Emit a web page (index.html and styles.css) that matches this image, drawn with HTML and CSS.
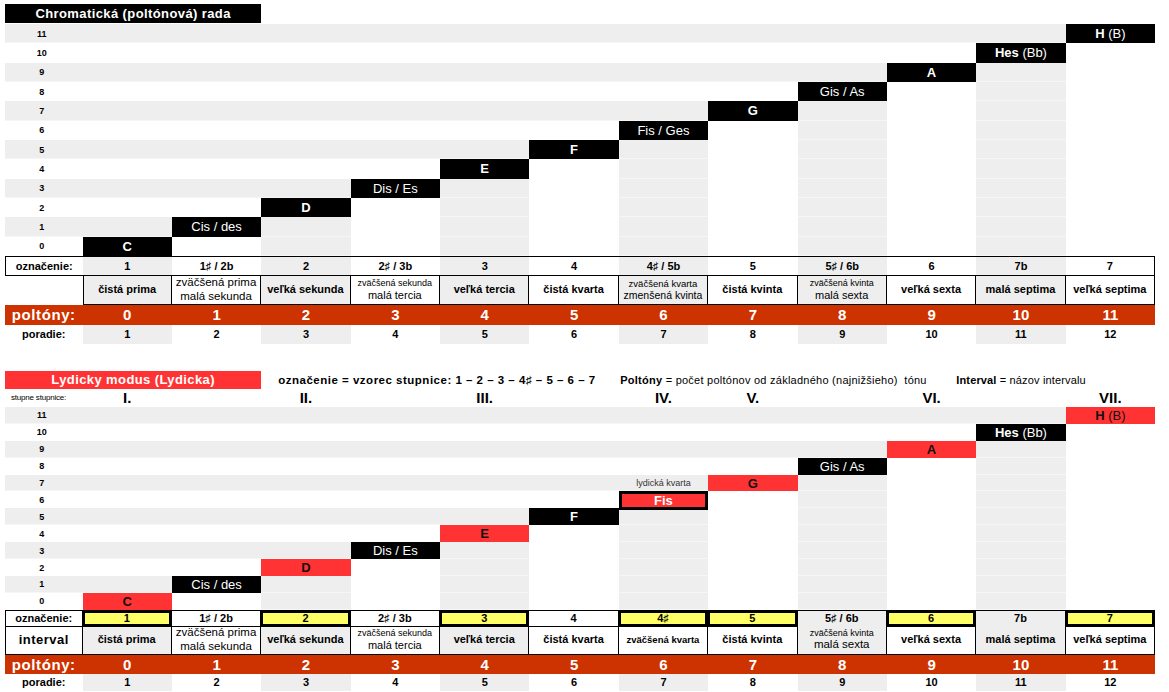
FILE: index.html
```html
<!DOCTYPE html>
<html lang="sk">
<head>
<meta charset="utf-8">
<title>Chromatická rada a Lydický modus</title>
<link rel="stylesheet" href="styles.css">
</head>
<body>
<div class="page">
  <section class="sec">
    <div class="grid titlerow"><span class="title">Chromatická (poltónová) rada</span></div>
    <div class="grid chart chart1">
      <span class="l g">11</span><span class="g"></span><span class="g"></span><span class="g"></span><span class="g"></span><span class="g"></span><span class="g"></span><span class="g"></span><span class="g"></span><span class="g"></span><span class="g"></span><span class="g"></span><span class="n a"><b>H</b>&nbsp;(B)</span>
      <span class="l">10</span><span></span><span></span><span></span><span></span><span></span><span></span><span></span><span></span><span></span><span></span><span class="n a"><b>Hes</b>&nbsp;(Bb)</span><span></span>
      <span class="l g">9</span><span class="g"></span><span class="g"></span><span class="g"></span><span class="g"></span><span class="g"></span><span class="g"></span><span class="g"></span><span class="g"></span><span class="g"></span><span class="n">A</span><span class="g"></span><span></span>
      <span class="l">8</span><span></span><span></span><span></span><span></span><span></span><span></span><span></span><span></span><span class="n a">Gis / As</span><span></span><span class="g"></span><span></span>
      <span class="l g">7</span><span class="g"></span><span class="g"></span><span class="g"></span><span class="g"></span><span class="g"></span><span class="g"></span><span class="g"></span><span class="n">G</span><span class="g"></span><span></span><span class="g"></span><span></span>
      <span class="l">6</span><span></span><span></span><span></span><span></span><span></span><span></span><span class="n a">Fis / Ges</span><span></span><span class="g"></span><span></span><span class="g"></span><span></span>
      <span class="l g">5</span><span class="g"></span><span class="g"></span><span class="g"></span><span class="g"></span><span class="g"></span><span class="n">F</span><span class="g"></span><span></span><span class="g"></span><span></span><span class="g"></span><span></span>
      <span class="l">4</span><span></span><span></span><span></span><span></span><span class="n">E</span><span></span><span class="g"></span><span></span><span class="g"></span><span></span><span class="g"></span><span></span>
      <span class="l g">3</span><span class="g"></span><span class="g"></span><span class="g"></span><span class="n a">Dis / Es</span><span class="g"></span><span></span><span class="g"></span><span></span><span class="g"></span><span></span><span class="g"></span><span></span>
      <span class="l">2</span><span></span><span></span><span class="n">D</span><span></span><span class="g"></span><span></span><span class="g"></span><span></span><span class="g"></span><span></span><span class="g"></span><span></span>
      <span class="l g">1</span><span class="g"></span><span class="n a">Cis / des</span><span class="g"></span><span></span><span class="g"></span><span></span><span class="g"></span><span></span><span class="g"></span><span></span><span class="g"></span><span></span>
      <span class="l">0</span><span class="n">C</span><span></span><span class="g"></span><span></span><span class="g"></span><span></span><span class="g"></span><span></span><span class="g"></span><span></span><span class="g"></span><span></span>
    </div>
    <div class="grid ozn ozn1">
      <span class="lb">označenie:</span><span class="g">1</span><span>1♯ / 2b</span><span class="g">2</span><span>2♯ / 3b</span><span class="g">3</span><span>4</span><span class="g">4♯ / 5b</span><span>5</span><span class="g">5♯ / 6b</span><span>6</span><span class="g">7b</span><span>7</span>
    </div>
    <div class="grid int int1">
      <span class="blank"></span>
      <span class="g bo">čistá prima</span>
      <span><span class="s115">zväčšená prima</span><span class="s115">malá sekunda</span></span>
      <span class="g bo">veľká sekunda</span>
      <span><span class="s9">zväčšená sekunda</span><span class="s11">malá tercia</span></span>
      <span class="g bo">veľká tercia</span>
      <span class="bo">čistá kvarta</span>
      <span class="g"><span class="s95">zväčšená kvarta</span><span class="s105">zmenšená kvinta</span></span>
      <span class="bo">čistá kvinta</span>
      <span class="g"><span class="s9">zväčšená kvinta</span><span class="s11">malá sexta</span></span>
      <span class="bo">veľká sexta</span>
      <span class="g bo">malá septima</span>
      <span class="bo">veľká septima</span>
    </div>
    <div class="grid pol pol1">
      <span class="plab">poltóny:</span><span>0</span><span>1</span><span>2</span><span>3</span><span>4</span><span>5</span><span>6</span><span>7</span><span>8</span><span>9</span><span>10</span><span>11</span>
    </div>
    <div class="grid por por1">
      <span>poradie:</span><span class="g">1</span><span>2</span><span class="g">3</span><span>4</span><span class="g">5</span><span>6</span><span class="g">7</span><span>8</span><span class="g">9</span><span>10</span><span class="g">11</span><span>12</span>
    </div>
  </section>

  <section class="sec sec2">
    <div class="grid titlerow2">
      <span class="title red">Lydicky modus (Lydicka)</span>
      <span class="info">
        <span class="t1">označenie = vzorec stupnice: 1 – 2 – 3 – 4♯ – 5 – 6 – 7</span>
        <span class="t2"><b>Poltóny</b> = počet poltónov od základného (najnižšieho)&nbsp; tónu</span>
        <span class="t3"><b>Interval</b> = názov intervalu</span>
      </span>
    </div>
    <div class="grid deg">
      <span class="ss">stupne stupnice:</span><span>I.</span><span></span><span>II.</span><span></span><span>III.</span><span></span><span>IV.</span><span>V.</span><span></span><span>VI.</span><span></span><span>VII.</span>
    </div>
    <div class="grid chart chart2">
      <span class="l g">11</span><span class="g"></span><span class="g"></span><span class="g"></span><span class="g"></span><span class="g"></span><span class="g"></span><span class="g"></span><span class="g"></span><span class="g"></span><span class="g"></span><span class="g"></span><span class="n a r"><b>H</b>&nbsp;(B)</span>
      <span class="l">10</span><span></span><span></span><span></span><span></span><span></span><span></span><span></span><span></span><span></span><span></span><span class="n a"><b>Hes</b>&nbsp;(Bb)</span><span></span>
      <span class="l g">9</span><span class="g"></span><span class="g"></span><span class="g"></span><span class="g"></span><span class="g"></span><span class="g"></span><span class="g"></span><span class="g"></span><span class="g"></span><span class="n r">A</span><span class="g"></span><span></span>
      <span class="l">8</span><span></span><span></span><span></span><span></span><span></span><span></span><span></span><span></span><span class="n a">Gis / As</span><span></span><span class="g"></span><span></span>
      <span class="l g">7</span><span class="g"></span><span class="g"></span><span class="g"></span><span class="g"></span><span class="g"></span><span class="g"></span><span class="g kv">lydická kvarta</span><span class="n r">G</span><span class="g"></span><span></span><span class="g"></span><span></span>
      <span class="l">6</span><span></span><span></span><span></span><span></span><span></span><span></span><span class="n r fis">Fis</span><span></span><span class="g"></span><span></span><span class="g"></span><span></span>
      <span class="l g">5</span><span class="g"></span><span class="g"></span><span class="g"></span><span class="g"></span><span class="g"></span><span class="n">F</span><span class="g"></span><span></span><span class="g"></span><span></span><span class="g"></span><span></span>
      <span class="l">4</span><span></span><span></span><span></span><span></span><span class="n r">E</span><span></span><span class="g"></span><span></span><span class="g"></span><span></span><span class="g"></span><span></span>
      <span class="l g">3</span><span class="g"></span><span class="g"></span><span class="g"></span><span class="n a">Dis / Es</span><span class="g"></span><span></span><span class="g"></span><span></span><span class="g"></span><span></span><span class="g"></span><span></span>
      <span class="l">2</span><span></span><span></span><span class="n r">D</span><span></span><span class="g"></span><span></span><span class="g"></span><span></span><span class="g"></span><span></span><span class="g"></span><span></span>
      <span class="l g">1</span><span class="g"></span><span class="n a">Cis / des</span><span class="g"></span><span></span><span class="g"></span><span></span><span class="g"></span><span></span><span class="g"></span><span></span><span class="g"></span><span></span>
      <span class="l">0</span><span class="n r">C</span><span></span><span class="g"></span><span></span><span class="g"></span><span></span><span class="g"></span><span></span><span class="g"></span><span></span><span class="g"></span><span></span>
    </div>
    <div class="grid ozn ozn2">
      <span class="lb">označenie:</span><span class="y">1</span><span>1♯ / 2b</span><span class="y">2</span><span>2♯ / 3b</span><span class="y">3</span><span>4</span><span class="y">4♯</span><span class="y">5</span><span class="g">5♯ / 6b</span><span class="y">6</span><span class="g">7b</span><span class="y">7</span>
    </div>
    <div class="grid int int2">
      <span class="ilab">interval</span>
      <span class="g bo">čistá prima</span>
      <span><span class="s115">zväčšená prima</span><span class="s115">malá sekunda</span></span>
      <span class="g bo">veľká sekunda</span>
      <span><span class="s9">zväčšená sekunda</span><span class="s11">malá tercia</span></span>
      <span class="g bo">veľká tercia</span>
      <span class="bo">čistá kvarta</span>
      <span class="bo s9b">zväčšená kvarta</span>
      <span class="bo">čistá kvinta</span>
      <span class="g"><span class="s9">zväčšená kvinta</span><span class="s115">malá sexta</span></span>
      <span class="bo">veľká sexta</span>
      <span class="g bo">malá septima</span>
      <span class="bo">veľká septima</span>
    </div>
    <div class="grid pol pol2">
      <span class="plab">poltóny:</span><span>0</span><span>1</span><span>2</span><span>3</span><span>4</span><span>5</span><span>6</span><span>7</span><span>8</span><span>9</span><span>10</span><span>11</span>
    </div>
    <div class="grid por por2">
      <span>poradie:</span><span class="g">1</span><span>2</span><span class="g">3</span><span>4</span><span class="g">5</span><span>6</span><span class="g">7</span><span>8</span><span class="g">9</span><span>10</span><span class="g">11</span><span>12</span>
    </div>
  </section>
</div>
</body>
</html>
```

FILE: styles.css
```css
* { box-sizing: border-box; margin: 0; padding: 0; }

body {
  margin: 0;
  background: #ffffff;
  font-family: "Liberation Sans", Arial, "DejaVu Sans", sans-serif;
  color: #000;
}

.page {
  width: 1150px;
  margin-left: 5px;
  padding-top: 4px;
}

.grid {
  display: grid;
  grid-template-columns: 77.5px repeat(12, 1fr);
}

.grid > span {
  display: flex;
  align-items: center;
  justify-content: center;
  text-align: center;
  white-space: nowrap;
  min-width: 0;
}

.g { background: #eeeeee; }

/* titles */
.titlerow { height: 20px; }
.title {
  grid-column: 1 / span 3;
  height: 19px;
  background: #000;
  color: #fff;
  font-weight: bold;
  font-size: 13px;
  letter-spacing: 0.4px;
}
.title.red { background: #ff3333; height: 18px; }

/* staircase charts */
.chart1 { grid-auto-rows: 19.33px; }
.chart2 { grid-auto-rows: 16.92px; }

.chart > .g { box-shadow: inset 0 -1px 0 #f6f6f6; }

.chart > .l {
  font-size: 9px;
  font-weight: bold;
  padding-right: 4px;
}

.chart > .n {
  background: #000;
  color: #fff;
  font-weight: bold;
  font-size: 13px;
  box-shadow: none;
}
.chart > .n.a { font-weight: normal; }
.chart > .n.r { background: #ff3333; color: #111; }
.chart > .n.fis {
  color: #fff;
  border: 3px solid #000;
  margin-bottom: -2px;
  position: relative;
  z-index: 1;
}
.chart > .kv {
  font-size: 9px;
  color: #333;
}

/* označenie rows */
.ozn { font-size: 11px; font-weight: bold; }
.ozn1 { height: 20px; }
.ozn1 > span {
  border-top: 1px solid #000;
  border-bottom: 1px solid #000;
}
.ozn1 > span:first-child { border-left: 1px solid #000; }
.ozn1 > span:last-child { border-right: 1px solid #000; }

.ozn2 { height: 16px; }
.ozn2 > span {
  border-top: 1px solid #000;
  border-bottom: 1px solid #000;
  border-right: 1px solid #000;
}
.ozn2 > span:first-child { border-left: 1px solid #000; }
.ozn2 > .y {
  background: #ffff66;
  border: 3px solid #000;
  margin-left: -1px;
  position: relative;
  z-index: 1;
  font-size: 11px;
  line-height: 1;
}

/* interval rows */
.int { height: 29px; font-size: 11px; }
.int > span {
  flex-direction: column;
  border-right: 1px solid #000;
  border-bottom: 1px solid #000;
  line-height: 1.2;
}
.int1 > span.blank { border: none; }
.int1 > span:nth-child(2) { border-left: 1px solid #000; }
.int2 > span:first-child { border-left: 1px solid #000; }

.int .bo { font-weight: bold; font-size: 11px; }
.int .s9b { font-size: 9.5px; }
.s115 { font-size: 11.5px; }
.s11 { font-size: 11px; }
.s105 { font-size: 10.5px; }
.s95 { font-size: 9.5px; }
.s9 { font-size: 9px; }

.int2 > .ilab {
  font-size: 13px;
  font-weight: bold;
  letter-spacing: 0.5px;
}

/* poltóny rows */
.pol {
  background: #cc3300;
  color: #fff;
  font-weight: bold;
  font-size: 15px;
}
.pol1 { height: 20px; }
.pol2 { height: 19px; }
.pol > .plab { letter-spacing: 0.6px; font-size: 15px; }

/* poradie rows */
.por { font-size: 11px; font-weight: bold; }
.por1 { height: 19px; }
.por2 { height: 17px; }

/* second section */
.sec2 { margin-top: 27px; }

.titlerow2 { height: 18px; }
.titlerow2 > .info {
  grid-column: 4 / -1;
  justify-content: flex-start;
  text-align: left;
  padding-left: 17px;
  font-size: 11px;
}
.info > span { display: block; text-align: left; }
.info > .t1 { width: 342px; font-weight: bold; font-size: 11.5px; letter-spacing: 0.5px; }
.info > .t2 { width: 336px; letter-spacing: 0.25px; }
.info > .t3 { letter-spacing: 0.15px; }

.deg { height: 18px; }
.deg > span {
  font-size: 15px;
  font-weight: bold;
}
.deg > .ss {
  font-size: 8px;
  font-weight: normal;
  color: #000;
  justify-content: flex-start;
  padding-left: 6px;
  letter-spacing: -0.2px;
}
```
